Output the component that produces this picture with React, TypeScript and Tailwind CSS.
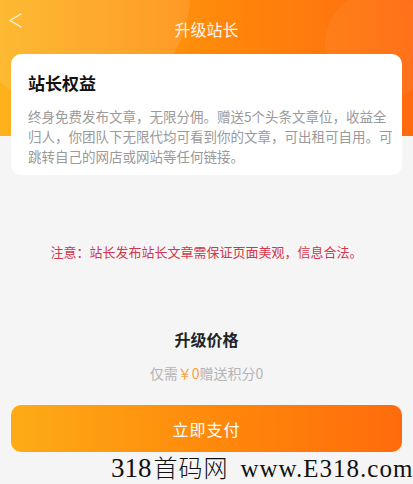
import React from 'react';

const CJK = "font-['Noto_Sans_CJK_SC','Noto_Sans',sans-serif]";

function BackArrow() {
  return (
    <svg width="15" height="15" viewBox="0 0 15 15" fill="none">
      <polyline points="13,1 2,7.5 13,14" stroke="#fff" strokeWidth="1.4" strokeLinecap="round" strokeLinejoin="round" opacity="0.85" />
    </svg>
  );
}

export default function App() {
  return (
    <div className={`relative w-[413px] h-[484px] overflow-hidden bg-[#f5f5f6] ${CJK}`}>
      {/* header background */}
      <div className="absolute inset-x-0 top-0 h-[136px] overflow-hidden bg-linear-to-r from-[#fdb21c] via-[#ff8a0b] to-[#ff6a0e]">
        <div className="absolute -left-[40px] -top-[120px] w-[230px] h-[230px] rounded-full bg-white/10" />
        <div className="absolute left-[325px] -top-[10px] w-[110px] h-[110px] rounded-full bg-white/5" />
      </div>

      <div className="relative flex flex-col">
        {/* nav bar */}
        <div className="relative h-[54px] flex items-center justify-center">
          <div className="absolute left-[8px] top-[13px]">
            <BackArrow />
          </div>
          <span className="text-[16px] leading-[22px] text-white/95 mt-[3px]">升级站长</span>
        </div>

        {/* card */}
        <div className="mx-[11px] rounded-[10px] bg-white pt-[17px] pb-[9px] px-[17px]">
          <h2 className="text-[17px] leading-[24px] font-bold text-[#111]">站长权益</h2>
          <p className="mt-[11px] text-[13.5px] leading-[20px] text-[#9a9a9a] whitespace-nowrap">
            终身免费发布文章，无限分佣。赠送5个头条文章位，收益全
            <br />
            归人，你团队下无限代均可看到你的文章，可出租可自用。可
            <br />
            跳转自己的网店或网站等任何链接。
          </p>
        </div>

        {/* notice */}
        <p className="mt-[68px] text-center text-[13px] leading-[18px] text-[#d3364a]">
          注意：站长发布站长文章需保证页面美观，信息合法。
        </p>

        {/* price */}
        <h3 className="mt-[67px] text-center text-[16px] leading-[22px] font-bold text-[#222]">升级价格</h3>
        <p className="mt-[13px] text-center text-[14px] leading-[20px] text-[#b4b4b4]">
          仅需<span className="text-[#f8a04a]">￥0</span>赠送积分0
        </p>

        {/* pay button */}
        <button className="mt-[22px] mx-[11px] h-[47px] rounded-[10px] bg-linear-to-r from-[#fdab16] via-[#ff8a0b] to-[#ff6b0c] text-white text-[16px] tracking-[1px]">
          立即支付
        </button>
      </div>

      {/* watermark */}
      <div className="absolute left-[111px] top-[455px] flex items-baseline text-[#111] whitespace-nowrap leading-none">
        <span className="font-['Liberation_Serif',serif] text-[27px]">318</span>
        <span className="font-['Noto_Sans_CJK_SC',sans-serif] text-[24px] font-light tracking-[1px] ml-[2px]">首码网</span>
        <span className="font-['Liberation_Serif',serif] text-[25px] tracking-[1px] ml-[12px]">www.E318.com</span>
      </div>
    </div>
  );
}
